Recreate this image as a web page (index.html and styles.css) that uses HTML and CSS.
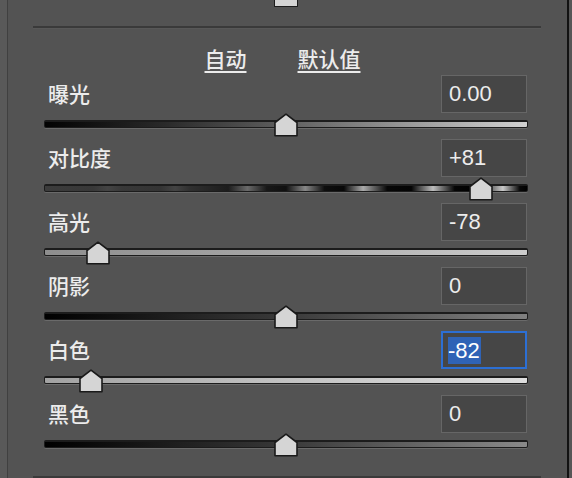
FILE: index.html
```html
<!DOCTYPE html>
<html lang="zh-CN">
<head>
<meta charset="utf-8">
<title>基本</title>
<link rel="stylesheet" href="styles.css">
</head>
<body>
<div class="window">
  <div class="edge-left"></div>
  <div class="panel">
    <div class="content"><div class="tail"></div></div>
    <div class="sep"></div>
    <div class="links"><a class="link">自动</a><a class="link">默认值</a></div>
    <div class="content rows">
      <div class="row">
        <div class="head"><span class="label">曝光</span><span class="box">0.00</span></div>
        <div class="track t-exposure"><svg class="thumb" style="left:50%" viewBox="0 0 24 24" width="24" height="24"><polygon points="1,9.5 12,1.2 23,9.5 23,22.8 1,22.8"/></svg></div>
      </div>
      <div class="row">
        <div class="head"><span class="label">对比度</span><span class="box">+81</span></div>
        <div class="track t-contrast"><svg class="thumb" style="left:90.5%" viewBox="0 0 24 24" width="24" height="24"><polygon points="1,9.5 12,1.2 23,9.5 23,22.8 1,22.8"/></svg></div>
      </div>
      <div class="row">
        <div class="head"><span class="label">高光</span><span class="box">-78</span></div>
        <div class="track t-highlights"><svg class="thumb" style="left:11%" viewBox="0 0 24 24" width="24" height="24"><polygon points="1,9.5 12,1.2 23,9.5 23,22.8 1,22.8"/></svg></div>
      </div>
      <div class="row">
        <div class="head"><span class="label">阴影</span><span class="box">0</span></div>
        <div class="track t-shadows"><svg class="thumb" style="left:50%" viewBox="0 0 24 24" width="24" height="24"><polygon points="1,9.5 12,1.2 23,9.5 23,22.8 1,22.8"/></svg></div>
      </div>
      <div class="row">
        <div class="head"><span class="label">白色</span><span class="box box-active"><span class="sel">-82</span></span></div>
        <div class="track t-whites"><svg class="thumb" style="left:9.5%" viewBox="0 0 24 24" width="24" height="24"><polygon points="1,9.5 12,1.2 23,9.5 23,22.8 1,22.8"/></svg></div>
      </div>
      <div class="row">
        <div class="head"><span class="label">黑色</span><span class="box">0</span></div>
        <div class="track t-blacks"><svg class="thumb" style="left:50%" viewBox="0 0 24 24" width="24" height="24"><polygon points="1,9.5 12,1.2 23,9.5 23,22.8 1,22.8"/></svg></div>
      </div>
    </div>
    <div class="sep sep-bottom"></div>
  </div>
  <div class="edge-right"></div>
</div>
</body>
</html>
```
FILE: styles.css
```css
html, body {
  margin: 0;
  padding: 0;
  background: #535353;
}
body {
  width: 572px;
  height: 478px;
  overflow: hidden;
  font-family: "Noto Sans CJK SC", "Noto Sans", sans-serif;
  color: #e8e8e8;
}
.window {
  display: flex;
  height: 478px;
}
.edge-left {
  width: 7px;
  background: #595959;
  border-right: 1px solid #404040;
  flex: none;
}
.edge-right {
  width: 3px;
  background: #565656;
  border-left: 2px solid #121212;
  flex: none;
}
.panel {
  flex: 1;
  background: #535353;
  display: flex;
  flex-direction: column;
}
.content {
  margin-left: 36px;
  margin-right: 39px;
}
.tail {
  box-sizing: border-box;
  width: 24px;
  height: 7px;
  margin-left: calc(50% - 12px);
  background: #d4d4d4;
  border: 1.5px solid #1c1c1c;
  border-top: none;
  border-radius: 0 0 1px 1px;
}
.sep {
  height: 2px;
  margin: 19px 26px 0 25px;
  background: #3a3a3a;
  box-shadow: 0 1px 0 #585858;
}
.sep-bottom {
  margin-top: 17px;
}
.links {
  display: flex;
  justify-content: center;
  gap: 51px;
  padding: 17px 0 0 0;
  height: 30px;
  margin-right: 10px;
}
.link {
  font-size: 21px;
  font-weight: 500;
  line-height: 26px;
  color: #ececec;
  text-decoration: underline;
  text-decoration-thickness: 1.5px;
  text-underline-offset: 4px;
}
.rows {
  display: flex;
  flex-direction: column;
}
.row {
  display: flex;
  flex-direction: column;
  height: 64px;
}
.head {
  display: flex;
  justify-content: space-between;
  align-items: center;
  height: 38px;
}
.label {
  font-size: 21px;
  font-weight: 500;
  line-height: 26px;
  padding-left: 4px;
  margin-top: -2px;
  color: #ececec;
}
.box {
  box-sizing: border-box;
  width: 86px;
  height: 38px;
  margin-right: 1px;
  background: #464646;
  border: 1px solid #666666;
  padding-left: 7px;
  font-family: "Liberation Sans", Arial, sans-serif;
  font-size: 22px;
  line-height: 36px;
  color: #ececec;
  display: flex;
  align-items: center;
}
.box-active {
  border: 2px solid #2c6fd4;
  padding-left: 5px;
}
.sel {
  background: #2f63b6;
  color: #ffffff;
  line-height: 27px;
  padding-right: 1px;
}
.track {
  position: relative;
  box-sizing: border-box;
  height: 8px;
  margin-top: 7px;
  border: 1px solid #1c1c1c;
  border-top-width: 2px;
  border-radius: 2px;
  box-shadow: 0 1px 0 #6a6a6a;
}
.thumb {
  position: absolute;
  top: -9px;
  margin-left: -12px;
  display: block;
}
.thumb polygon {
  fill: #d5d5d5;
  stroke: #1a1a1a;
  stroke-width: 1.6;
  stroke-linejoin: round;
}
.t-exposure {
  background: linear-gradient(to right, #030303, #2a2a2a 25%, #6a6a6a 55%, #d2d2d2);
}
.t-contrast {
  background: linear-gradient(to right,
    #3c3c3c 0%, #383838 10%, #444444 13%, #383838 16%,
    #343434 24%, #444444 27%, #303030 30%,
    #1c1c1c 38%, #6a6a6a 42%, #181818 46%,
    #101010 50%, #888888 54%, #0e0e0e 58%,
    #080808 62%, #aaaaaa 66%, #070707 71%,
    #040404 76%, #bdbdbd 80.5%, #050505 85%,
    #000000 90%, #cacaca 95%, #080808 98.5%, #000000 100%);
}
.t-highlights {
  background: linear-gradient(to right, #8e8e8e, #a8a8a8 50%, #cdcdcd);
}
.t-shadows {
  background: linear-gradient(to right, #000000, #3a3a3a 50%, #808080);
}
.t-whites {
  background: linear-gradient(to right, #a2a2a2, #c2c2c2 50%, #dedede);
}
.t-blacks {
  background: linear-gradient(to right, #000000, #383838 50%, #8a8a8a);
}
```
